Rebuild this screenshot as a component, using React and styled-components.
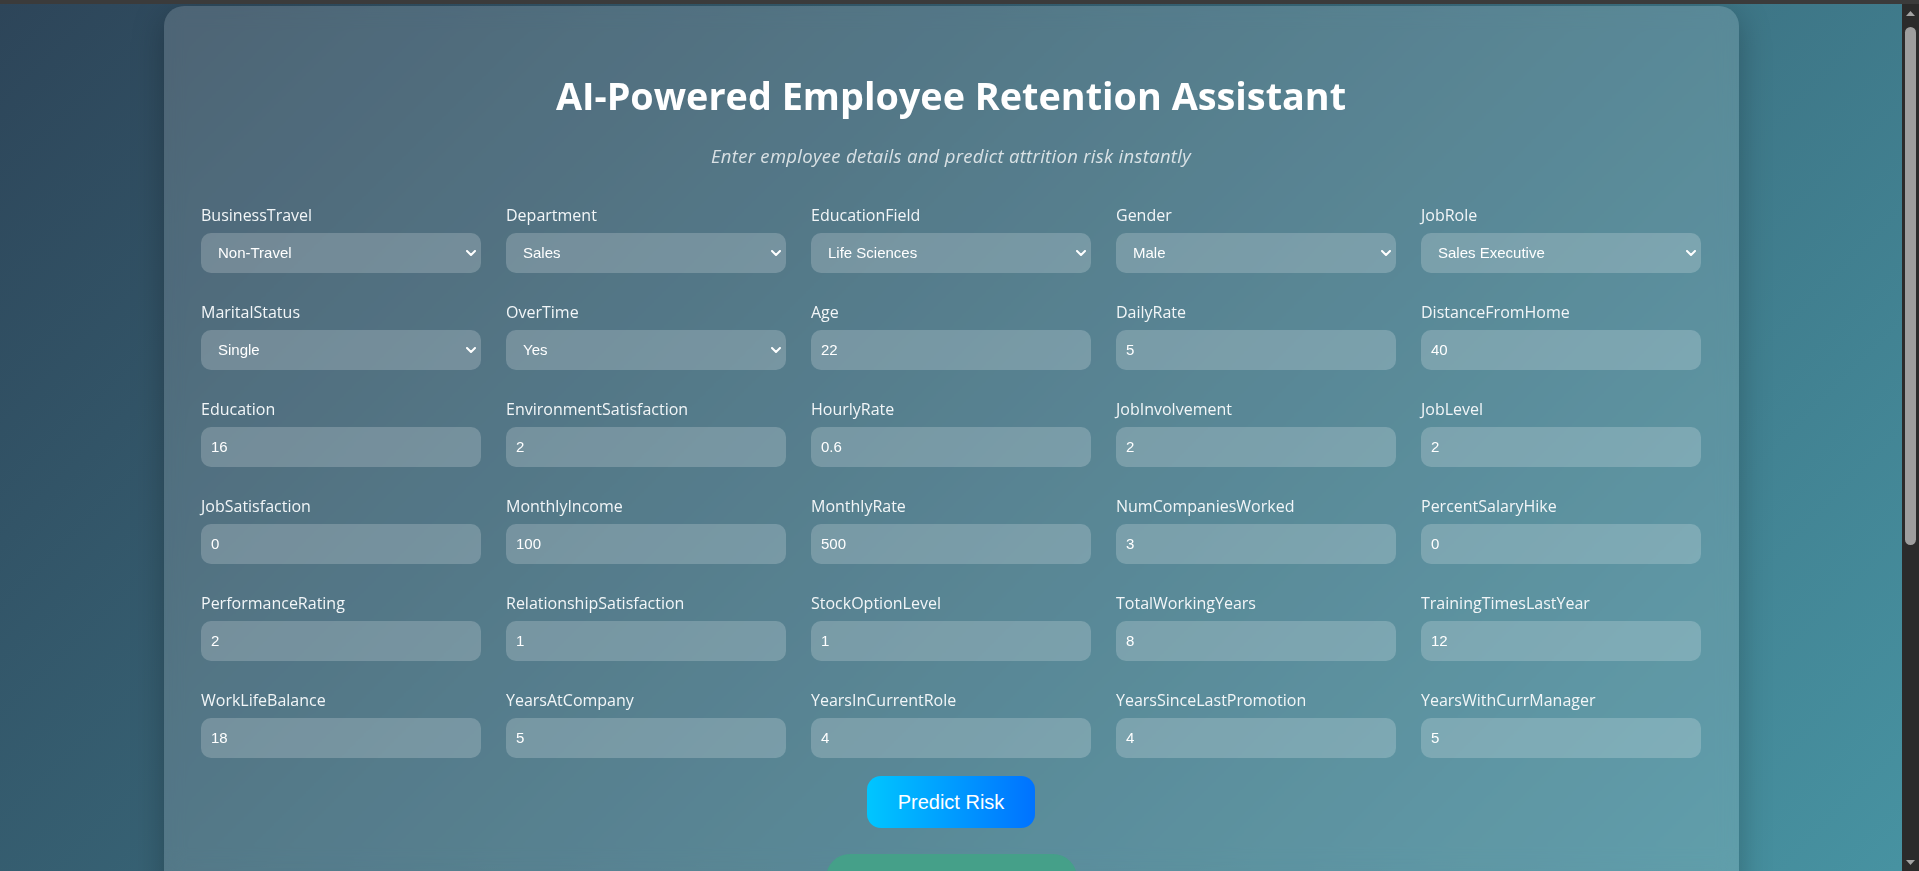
import styled, { createGlobalStyle } from 'styled-components';

const fields = [
  { name: 'BusinessTravel', value: 'Non-Travel', options: ['Non-Travel', 'Travel_Rarely', 'Travel_Frequently'] },
  { name: 'Department', value: 'Sales', options: ['Sales', 'Research & Development', 'Human Resources'] },
  { name: 'EducationField', value: 'Life Sciences', options: ['Life Sciences', 'Medical', 'Marketing', 'Technical Degree', 'Human Resources', 'Other'] },
  { name: 'Gender', value: 'Male', options: ['Male', 'Female'] },
  { name: 'JobRole', value: 'Sales Executive', options: ['Sales Executive', 'Research Scientist', 'Laboratory Technician', 'Manager', 'Sales Representative'] },
  { name: 'MaritalStatus', value: 'Single', options: ['Single', 'Married', 'Divorced'] },
  { name: 'OverTime', value: 'Yes', options: ['Yes', 'No'] },
  { name: 'Age', value: '22' },
  { name: 'DailyRate', value: '5' },
  { name: 'DistanceFromHome', value: '40' },
  { name: 'Education', value: '16' },
  { name: 'EnvironmentSatisfaction', value: '2' },
  { name: 'HourlyRate', value: '0.6' },
  { name: 'JobInvolvement', value: '2' },
  { name: 'JobLevel', value: '2' },
  { name: 'JobSatisfaction', value: '0' },
  { name: 'MonthlyIncome', value: '100' },
  { name: 'MonthlyRate', value: '500' },
  { name: 'NumCompaniesWorked', value: '3' },
  { name: 'PercentSalaryHike', value: '0' },
  { name: 'PerformanceRating', value: '2' },
  { name: 'RelationshipSatisfaction', value: '1' },
  { name: 'StockOptionLevel', value: '1' },
  { name: 'TotalWorkingYears', value: '8' },
  { name: 'TrainingTimesLastYear', value: '12' },
  { name: 'WorkLifeBalance', value: '18' },
  { name: 'YearsAtCompany', value: '5' },
  { name: 'YearsInCurrentRole', value: '4' },
  { name: 'YearsSinceLastPromotion', value: '4' },
  { name: 'YearsWithCurrManager', value: '5' },
];

export default function App() {
  return (
    <>
      <GlobalStyle />
      <Frame>
        <TopEdge />
        <Viewport>
          <Page>
            <Card>
              <Title>AI-Powered Employee Retention Assistant</Title>
              <Subtitle>Enter employee details and predict attrition risk instantly</Subtitle>
              <Form onSubmit={(e) => e.preventDefault()}>
                <FieldGrid>
                  {fields.map((f) => (
                    <Field key={f.name}>
                      <Label htmlFor={f.name}>{f.name}</Label>
                      {f.options ? (
                        <SelectWrap>
                          <Select id={f.name} defaultValue={f.value}>
                            {f.options.map((o) => (
                              <option key={o}>{o}</option>
                            ))}
                          </Select>
                          <Chevron viewBox="0 0 10 6" aria-hidden="true">
                            <path d="M1 1l4 4 4-4" />
                          </Chevron>
                        </SelectWrap>
                      ) : (
                        <Input id={f.name} type="number" defaultValue={f.value} />
                      )}
                    </Field>
                  ))}
                </FieldGrid>
                <PredictButton type="submit">Predict Risk</PredictButton>
              </Form>
              {/* result panel, only its top edge is in view */}
              <Result aria-live="polite" />
            </Card>
          </Page>
        </Viewport>
        <ScrollTrack>
          <ScrollArrow viewBox="0 0 9 5" aria-hidden="true">
            <path d="M0 5L4.5 0 9 5z" />
          </ScrollArrow>
          <Thumb />
          <ScrollArrow viewBox="0 0 9 5" aria-hidden="true" $down>
            <path d="M0 0L4.5 5 9 0z" />
          </ScrollArrow>
        </ScrollTrack>
      </Frame>
    </>
  );
}

const GlobalStyle = createGlobalStyle`
  * {
    box-sizing: border-box;
  }
  body {
    margin: 0;
    font-family: 'Open Sans', 'Liberation Sans', sans-serif;
  }
  input[type='number']::-webkit-inner-spin-button,
  input[type='number']::-webkit-outer-spin-button {
    -webkit-appearance: none;
    margin: 0;
  }
`;

const Frame = styled.div`
  display: grid;
  grid-template-columns: 1fr 17px;
  grid-template-rows: 4px 1fr;
  height: 100vh;
  overflow: hidden;
`;

const TopEdge = styled.div`
  grid-column: 1 / -1;
  background: #3b3b3b;
`;

const Viewport = styled.main`
  overflow: hidden;
`;

const Page = styled.div`
  min-height: 1400px;
  padding-top: 2px;
  background: linear-gradient(135deg, #2d4559, #4ca1af);
`;

const Card = styled.section`
  width: 1575px;
  margin: 0 auto;
  padding: 67px 37.5px 60px;
  border-radius: 20px;
  background: rgba(255, 255, 255, 0.15);
  box-shadow: 0 8px 32px rgba(0, 0, 0, 0.25);
  backdrop-filter: blur(10px);
`;

const Title = styled.h1`
  margin: 0;
  font-size: 37.8px;
  line-height: 46px;
  font-weight: 700;
  color: #ffffff;
  text-align: center;
`;

const Subtitle = styled.p`
  margin: 25px 0 0;
  font-size: 18.5px;
  line-height: 24px;
  letter-spacing: 0.3px;
  font-style: italic;
  color: rgba(255, 255, 255, 0.78);
  text-align: center;
`;

const Form = styled.form`
  display: flex;
  flex-direction: column;
  align-items: center;
  margin-top: 34.5px;
`;

const FieldGrid = styled.div`
  display: grid;
  grid-template-columns: repeat(5, 1fr);
  column-gap: 25px;
  row-gap: 27px;
  width: 100%;
`;

const Field = styled.div`
  display: flex;
  flex-direction: column;
`;

const Label = styled.label`
  margin-bottom: 5px;
  font-size: 16px;
  line-height: 25px;
  color: #f2f6f8;
`;

const controlBase = `
  width: 100%;
  height: 40px;
  border: none;
  border-radius: 10px;
  background: rgba(255, 255, 255, 0.2);
  color: #ffffff;
  font-family: 'Liberation Sans', Arial, sans-serif;
  font-size: 15px;
  outline: none;
`;

const Input = styled.input`
  ${controlBase}
  padding: 0 10px;
  -moz-appearance: textfield;
`;

const SelectWrap = styled.div`
  position: relative;
`;

const Select = styled.select`
  ${controlBase}
  padding: 0 24px 0 17px;
  appearance: none;

  option {
    color: #222;
  }
`;

const Chevron = styled.svg`
  position: absolute;
  right: 5px;
  top: 50%;
  width: 10px;
  height: 6px;
  transform: translateY(-50%);
  fill: none;
  stroke: #ffffff;
  stroke-width: 2;
  stroke-linecap: round;
  stroke-linejoin: round;
  pointer-events: none;
`;

const PredictButton = styled.button`
  margin-top: 18px;
  padding: 14px 31px;
  border: none;
  border-radius: 14px;
  background: linear-gradient(to right, #00c6ff, #0072ff);
  color: #ffffff;
  font-family: 'Liberation Sans', Arial, sans-serif;
  font-size: 20px;
  line-height: 24px;
  cursor: pointer;
`;

const Result = styled.div`
  width: 251px;
  height: 90px;
  margin: 26px auto 0;
  border-radius: 24px;
  background: #45a089;
`;

const ScrollTrack = styled.div`
  display: flex;
  flex-direction: column;
  align-items: center;
  background: #2b2b2b;
`;

const ScrollArrow = styled.svg`
  width: 9px;
  height: 5px;
  margin: ${(p) => (p.$down ? 'auto 0 6px' : '7px 0 0')};
  fill: #a3a3a3;
`;

const Thumb = styled.div`
  width: 11px;
  height: 518px;
  margin-top: 11px;
  border-radius: 6px;
  background: #9e9e9e;
`;
